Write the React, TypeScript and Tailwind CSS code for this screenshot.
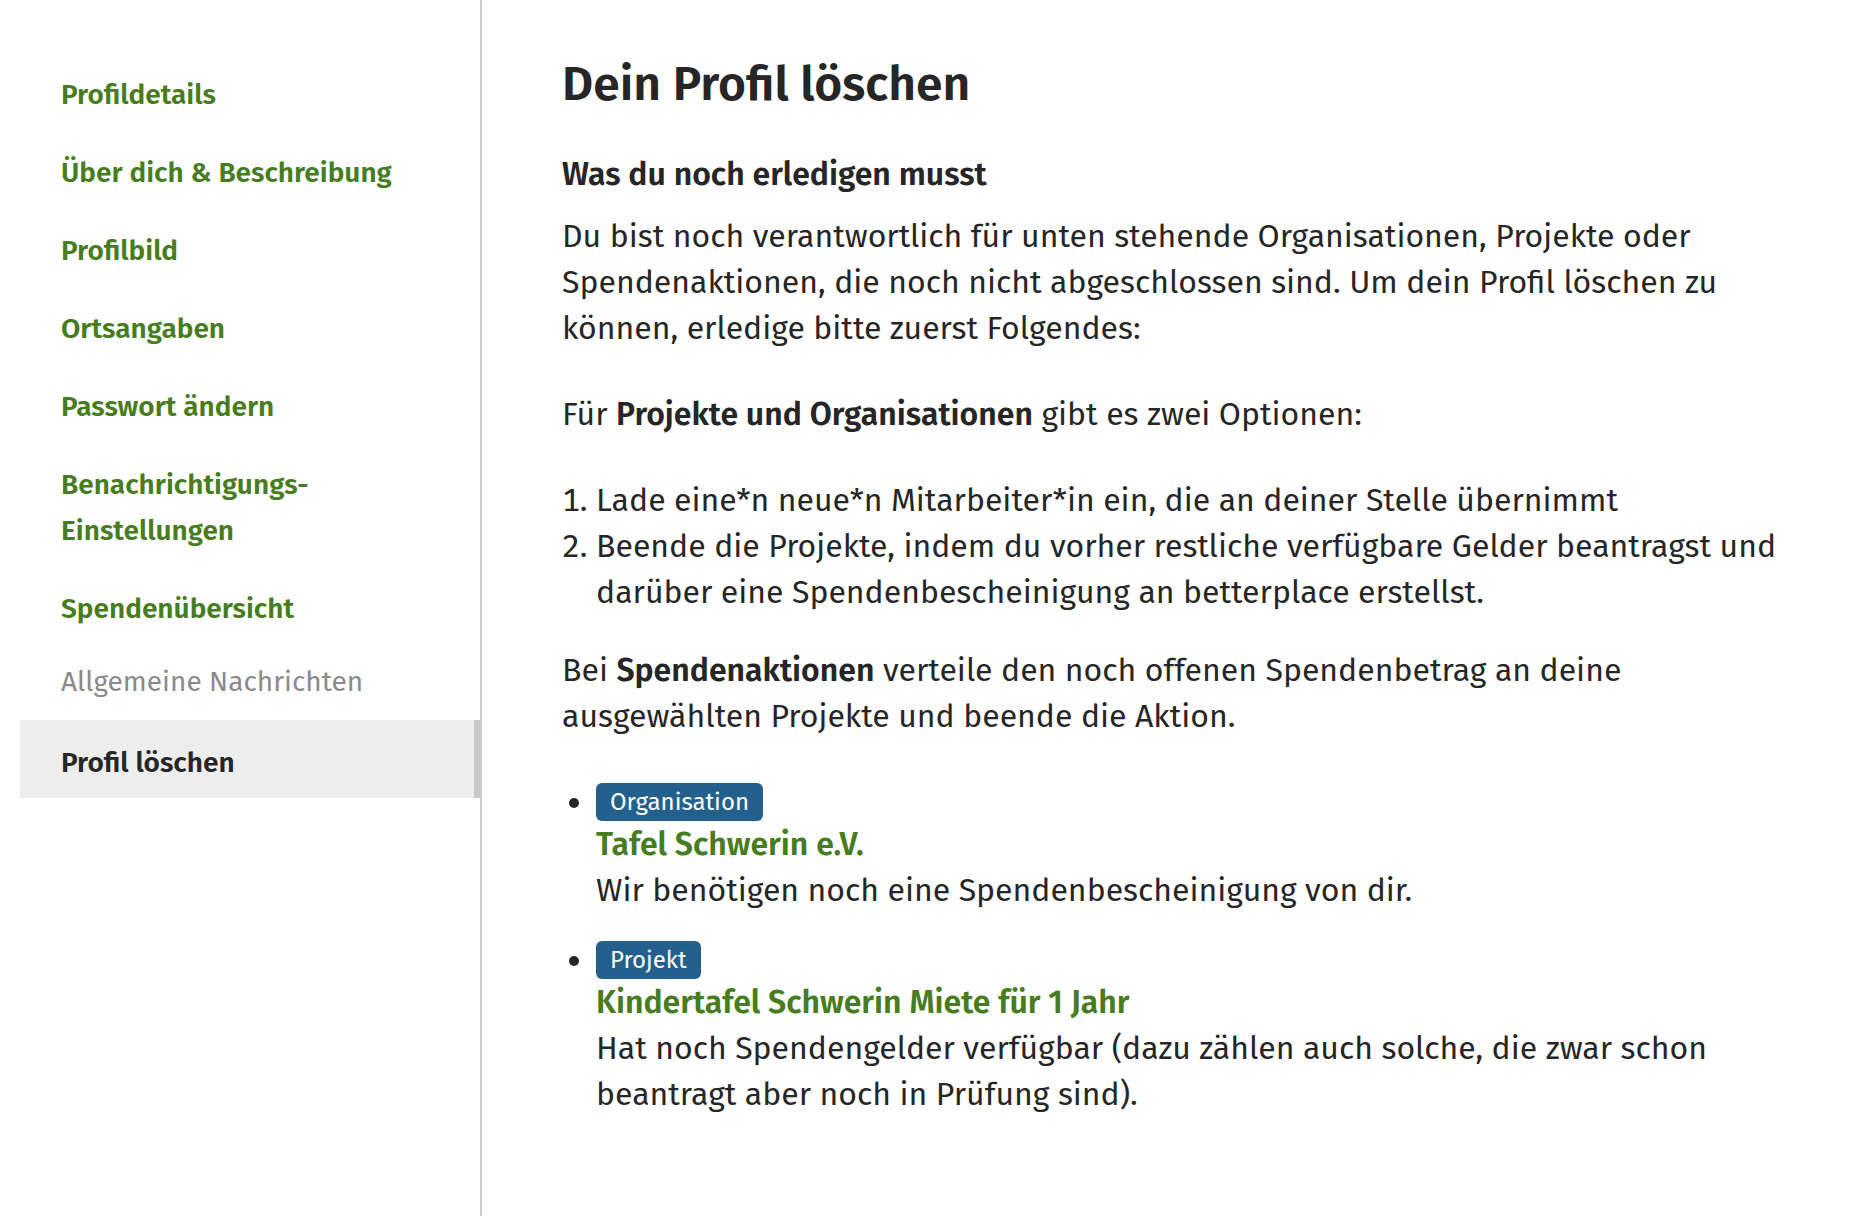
const navLinks = [
  'Profildetails',
  'Über dich & Beschreibung',
  'Profilbild',
  'Ortsangaben',
  'Passwort ändern',
]

function Badge({ children }: { children: string }) {
  return (
    <div className="leading-[38px]">
      <span className="inline-block rounded-[6px] bg-[#23608d] px-[14px] align-top text-[24px] leading-[38px] text-white">
        {children}
      </span>
    </div>
  )
}

export default function App() {
  return (
    <div className="flex min-h-screen bg-white font-['Fira_Sans','Open_Sans',sans-serif] text-[#262626]">
      <aside className="w-[482px] shrink-0 border-r-2 border-[#cccccc] pl-5 pt-[56px]">
        <nav className="flex flex-col text-[28px]">
          {navLinks.map((label) => (
            <a key={label} href="#" className="block py-4 pl-[41px] pr-4 font-semibold leading-[46px] text-[#477c20]">
              {label}
            </a>
          ))}
          <a href="#" className="block py-4 pl-[41px] pr-4 font-semibold leading-[46px] text-[#477c20]">
            Benachrichtigungs-
            <br />
            Einstellungen
          </a>
          <a href="#" className="block py-4 pl-[41px] pr-4 font-semibold leading-[46px] text-[#477c20]">
            Spendenübersicht
          </a>
          <span className="block pb-[18px] pl-[41px] pr-4 pt-[14px] leading-[40px] text-[#8a8a8a]">
            Allgemeine Nachrichten
          </span>
          <a
            href="#"
            className="block border-r-[6px] border-[#c8c8c8] bg-[#ededed] pb-3 pl-[41px] pr-4 pt-5 font-semibold leading-[46px] text-[#262626]"
          >
            Profil löschen
          </a>
        </nav>
      </aside>

      <main className="min-w-0 flex-1 pl-20 pr-[60px] pt-[53px] text-[32px] leading-[46px]">
        <h1 className="text-[48px] font-semibold leading-[62px]">Dein Profil löschen</h1>
        <h2 className="mb-4 mt-9 text-[32px] font-semibold leading-[46px]">Was du noch erledigen musst</h2>
        <p className="mb-10">
          Du bist noch verantwortlich für unten stehende Organisationen, Projekte oder
          <br />
          Spendenaktionen, die noch nicht abgeschlossen sind. Um dein Profil löschen zu
          <br />
          können, erledige bitte zuerst Folgendes:
        </p>
        <p className="mb-10">
          Für <strong className="font-semibold">Projekte und Organisationen</strong> gibt es zwei Optionen:
        </p>
        <ol className="mb-[32px] list-decimal pl-[34px]">
          <li>Lade eine*n neue*n Mitarbeiter*in ein, die an deiner Stelle übernimmt</li>
          <li>
            Beende die Projekte, indem du vorher restliche verfügbare Gelder beantragst und
            <br />
            darüber eine Spendenbescheinigung an betterplace erstellst.
          </li>
        </ol>
        <p className="mb-10">
          Bei <strong className="font-semibold">Spendenaktionen</strong> verteile den noch offenen Spendenbetrag an deine
          <br />
          ausgewählten Projekte und beende die Aktion.
        </p>
        <ul className="list-disc space-y-6 pl-[34px]">
          <li>
            <Badge>Organisation</Badge>
            <a href="#" className="block font-semibold text-[#477c20]">
              Tafel Schwerin e.V.
            </a>
            <p>Wir benötigen noch eine Spendenbescheinigung von dir.</p>
          </li>
          <li>
            <Badge>Projekt</Badge>
            <a href="#" className="block font-semibold text-[#477c20]">
              Kindertafel Schwerin Miete für 1 Jahr
            </a>
            <p>
              Hat noch Spendengelder verfügbar (dazu zählen auch solche, die zwar schon
              <br />
              beantragt aber noch in Prüfung sind).
            </p>
          </li>
        </ul>
      </main>
    </div>
  )
}
